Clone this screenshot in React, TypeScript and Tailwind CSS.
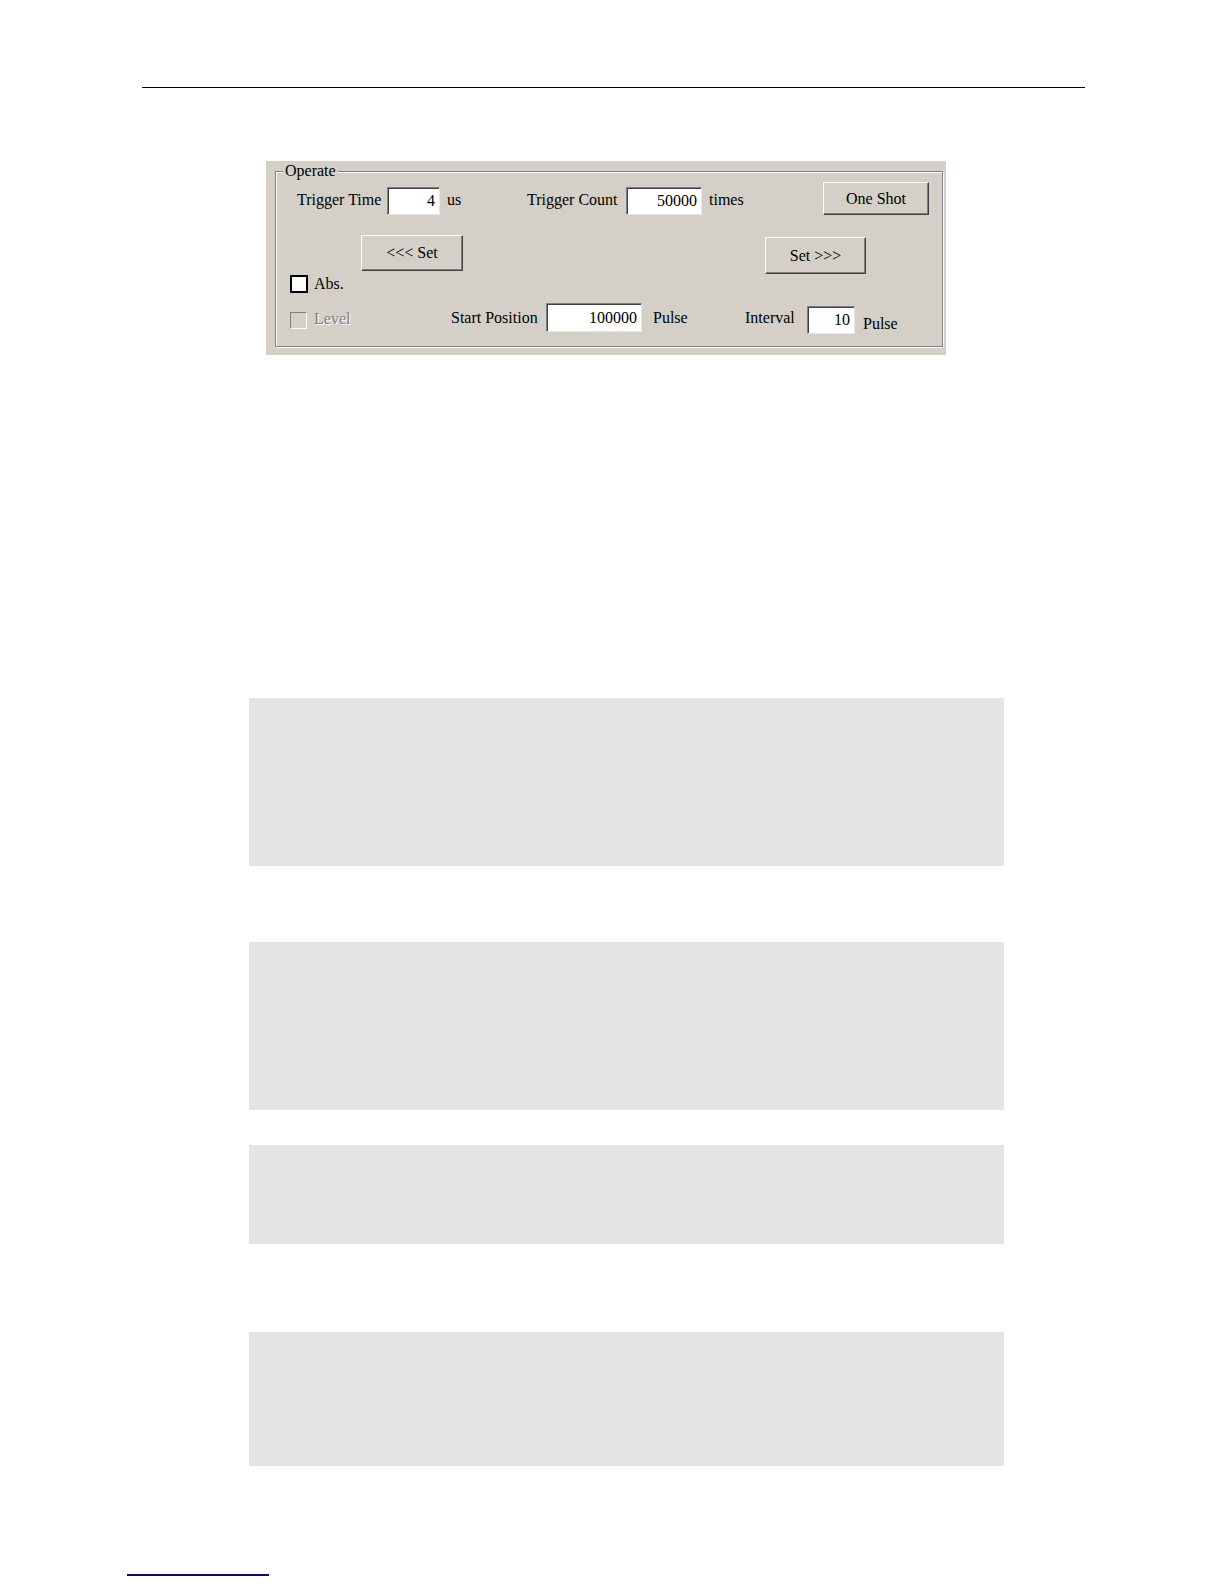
import React from 'react';

const serif = { fontFamily: '"Liberation Serif", "Times New Roman", serif' };

const Button = ({ label, className }: { label: string; className: string }) => (
  <div
    className={`flex items-center justify-center bg-[#d4d0c8] border border-t-white border-l-white border-r-[#404040] border-b-[#404040] shadow-[inset_-1px_-1px_0_#808080] text-[16px] text-black ${className}`}
  >
    {label}
  </div>
);

const Field = ({ value, className }: { value: string; className: string }) => (
  <div
    className={`flex items-center justify-end pr-[4px] bg-white border border-t-[#808080] border-l-[#808080] border-r-[#e8e6e0] border-b-[#e8e6e0] shadow-[inset_1px_1px_0_#404040] text-[16px] text-black ${className}`}
  >
    {value}
  </div>
);

export default function App() {
  return (
    <div className="w-full min-h-[1584px] bg-white flex flex-col" style={serif}>
      <div className="mt-[87px] ml-[142px] w-[943px] h-px bg-black" />

      {/* Operate dialog */}
      <div className="mt-[73px] ml-[266px] w-[680px] h-[194px] bg-[#d4d0c8] pt-[10px] pl-[9px]">
        <div className="relative w-[668px] h-[176px] border border-[#808080] shadow-[inset_1px_1px_0_#fff,1px_1px_0_#fff] text-[16px] leading-[20px] text-black">
          <span className="absolute left-[7px] top-[-11px] bg-[#d4d0c8] px-[2px]">Operate</span>

          {/* row 1 */}
          <div className="flex items-start mt-[10px] h-[33px]">
            <span className="ml-[21px] w-[90px] mt-[8px] whitespace-nowrap">Trigger Time</span>
            <Field value="4" className="w-[53px] h-[28px] mt-[5px]" />
            <span className="ml-[7px] w-[80px] mt-[8px]">us</span>
            <span className="w-[99px] mt-[8px] whitespace-nowrap">Trigger Count</span>
            <Field value="50000" className="w-[76px] h-[28px] mt-[5px]" />
            <span className="ml-[7px] w-[114px] mt-[8px]">times</span>
            <Button label="One Shot" className="w-[106px] h-[33px]" />
          </div>

          {/* row 2 */}
          <div className="flex items-start mt-[20px] h-[39px]">
            <Button label="<<< Set" className="ml-[85px] w-[102px] h-[36px]" />
            <Button label="Set >>>" className="ml-[302px] mt-[2px] w-[101px] h-[37px]" />
          </div>

          {/* row 3 */}
          <div className="flex items-center mt-px h-[18px]">
            <div className="ml-[14px] w-[18px] h-[18px] border-2 border-black bg-white" />
            <span className="ml-[6px]">Abs.</span>
          </div>

          {/* row 4 */}
          <div className="flex items-start mt-[10px]">
            <div className="ml-[14px] mt-[9px] w-[17px] h-[17px] border border-t-[#808080] border-l-[#808080] border-r-white border-b-white bg-[#d4d0c8]" />
            <span className="ml-[7px] w-[137px] mt-[6px] text-[#808080] [text-shadow:1px_1px_0_#fff]">Level</span>
            <span className="w-[95px] mt-[5px] whitespace-nowrap">Start Position</span>
            <Field value="100000" className="w-[96px] h-[29px]" />
            <span className="ml-[11px] w-[92px] mt-[5px]">Pulse</span>
            <span className="w-[62px] mt-[5px]">Interval</span>
            <Field value="10" className="w-[48px] h-[28px] mt-[3px]" />
            <span className="ml-[8px] mt-[11px]">Pulse</span>
          </div>
        </div>
      </div>

      <div className="mt-[343px] ml-[249px] w-[755px] h-[168px] bg-[#e4e4e4]" />
      <div className="mt-[76px] ml-[249px] w-[755px] h-[168px] bg-[#e4e4e4]" />
      <div className="mt-[35px] ml-[249px] w-[755px] h-[99px] bg-[#e4e4e4]" />
      <div className="mt-[88px] ml-[249px] w-[755px] h-[134px] bg-[#e4e4e4]" />

      <div className="mt-[108px] ml-[127px] w-[142px] h-[2px] bg-[#0a0a80]" />
    </div>
  );
}
